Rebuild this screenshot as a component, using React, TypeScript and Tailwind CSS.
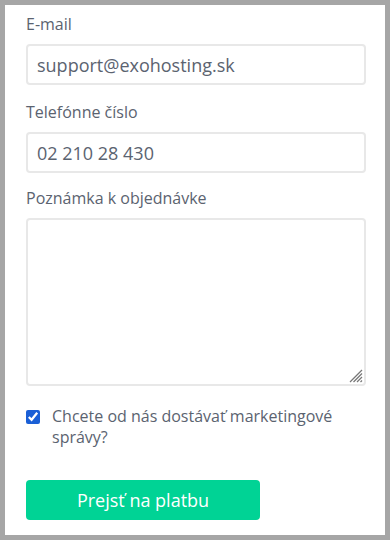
export default function App() {
  return (
    <div className="min-h-[540px] bg-[#a6a6a6] p-[5px] font-['Open_Sans',sans-serif]">
      <div className="h-[530px] bg-white px-[21px] pt-[7px] text-[#5b6370]">
        <label className="block text-base leading-6">E-mail</label>
        <input
          type="text"
          defaultValue="support@exohosting.sk"
          className="mt-2 block h-[41px] w-[340px] rounded border-2 border-[#e8e8e8] px-[9px] text-lg text-[#5b6370] outline-none"
        />

        <label className="mt-[15px] block text-base leading-6">
          Telefónne číslo
        </label>
        <input
          type="text"
          defaultValue="02 210 28 430"
          className="mt-2 block h-[41px] w-[340px] rounded border-2 border-[#e8e8e8] px-[9px] text-lg text-[#5b6370] outline-none"
        />

        <label className="mt-[13px] block text-base leading-6">
          Poznámka k objednávke
        </label>
        <div className="relative mt-2 w-[340px]">
          <textarea className="block h-[168px] w-full resize-none rounded border-2 border-[#e8e8e8] px-[9px] text-lg outline-none" />
          {/* resize grip */}
          <svg
            className="absolute right-[3px] bottom-[3px]"
            width="14"
            height="14"
            viewBox="0 0 14 14"
            stroke="#777"
            strokeWidth="1.2"
          >
            <line x1="13" y1="1" x2="1" y2="13" />
            <line x1="13" y1="4.5" x2="4.5" y2="13" />
            <line x1="13" y1="8" x2="8" y2="13" />
            <line x1="13" y1="11.5" x2="11.5" y2="13" />
          </svg>
        </div>

        <div className="mt-[20px] flex items-start gap-3">
          <input
            type="checkbox"
            defaultChecked
            className="mt-[4px] h-[14px] w-[14px] shrink-0 accent-[#1a5fd6]"
          />
          <span className="text-base leading-[21px]">
            Chcete od nás dostávať marketingové správy?
          </span>
        </div>

        <button className="mt-[32px] block h-10 w-[234px] rounded bg-[#00d395] text-lg text-white">
          Prejsť na platbu
        </button>
      </div>
    </div>
  );
}
